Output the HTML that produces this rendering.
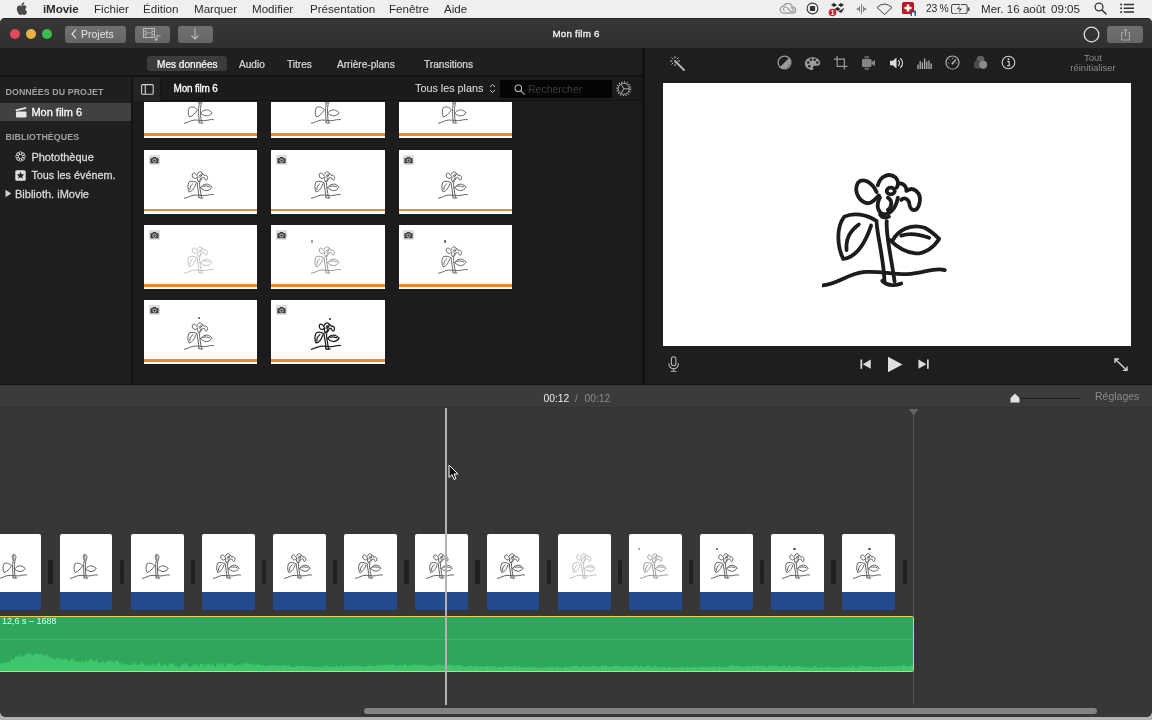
<!DOCTYPE html>
<html lang="fr">
<head>
<meta charset="utf-8">
<title>iMovie</title>
<style>
*{box-sizing:border-box;margin:0;padding:0}
html,body{width:1152px;height:720px;overflow:hidden;background:#b2b2b2;font-family:"Liberation Sans",sans-serif;}
body{position:relative}
#menubar,#win{will-change:transform}
.abs{position:absolute}
.t{position:absolute;white-space:nowrap}
#menubar{position:absolute;left:0;top:0;width:1152px;height:18px;background:#efefef;color:#2c2c2c;font-size:11.600px;line-height:18px}
#menubar .t{top:0}
#win{position:absolute;left:0;top:18px;width:1152px;height:698.500px;background:#1e1e1e;border-radius:5px 5px 6px 6px;overflow:hidden}
#titlebar{position:absolute;left:0;top:0;width:1152px;height:30px;background:linear-gradient(#373737,#303030);border-top:1px solid #262626}
.tl{position:absolute;top:9.500px;width:10.600px;height:10.600px;border-radius:50%}
.tbtn{position:absolute;top:6.600px;height:17px;background:linear-gradient(#707070,#666);border-radius:3px;color:#e4e4e4;font-size:10.500px;line-height:17px}
.sh{position:absolute;left:5.500px;font-size:8.800px;font-weight:bold;color:#a0a0a0;line-height:12px;white-space:nowrap;letter-spacing:.1px}
.si{position:absolute;left:31.400px;font-size:11px;-webkit-text-stroke:.28px;color:#dcdcdc;line-height:16px;white-space:nowrap}
.th{position:absolute;width:113.300px;height:64px;background:#fff}
.ob{position:absolute;left:0;top:59.200px;width:113.300px;height:2.600px;background:#e28a3c}
.clip{position:absolute;height:76px;background:linear-gradient(#fff 0,#fff 57.700px,#254b8f 57.700px,#254b8f 100%);border-radius:2px;overflow:hidden}
</style>
</head>
<body>
<svg width="0" height="0" style="position:absolute">
<defs>
<symbol id="fl" viewBox="100 100 560 520">
<g fill="none" stroke-linecap="round" stroke-linejoin="round">
<path d="M105,608 C180,600 220,550 300,548 C380,546 420,560 480,558 C560,555 600,525 650,540"/>
<path d="M345,330 C350,400 375,480 380,590"/>
<path d="M390,320 C385,380 410,480 425,590"/>
<path d="M370,588 C390,610 430,612 455,600"/>
<path d="M345,320 C300,290 240,280 200,300 C160,350 170,440 195,490 C260,480 300,400 320,340"/>
<path d="M265,335 C230,360 205,400 210,450"/>
<path d="M415,410 C440,360 500,330 560,350 C590,365 610,385 625,400 C600,440 560,465 520,465 C470,460 430,430 405,405"/>
<path d="M455,385 C500,370 540,380 580,395"/>
<path d="M345,190 C320,140 280,125 260,150 C240,190 270,240 310,240 C330,235 345,215 355,205"/>
<path d="M350,160 C360,120 400,100 430,125 C445,140 440,160 435,170"/>
<path d="M440,150 C470,150 480,170 478,185 C510,160 548,195 537,240 C527,282 495,282 490,235 C480,215 465,215 455,225"/>
<ellipse cx="408" cy="185" rx="18" ry="15"/>
<path d="M360,215 C340,250 350,280 375,290 C400,290 430,270 440,215"/>
<path d="M395,215 C420,230 410,260 395,270"/>
<path d="M360,290 C365,300 380,310 400,300"/>
</g>
</symbol>
<symbol id="bud" viewBox="100 100 560 520">
<g fill="none" stroke-linecap="round" stroke-linejoin="round">
<path d="M105,608 C180,600 220,550 300,548 C380,546 420,560 480,558 C560,555 600,525 650,540"/>
<path d="M385,590 C380,480 355,380 385,240"/>
<path d="M425,590 C410,480 395,380 420,240"/>
<path d="M370,588 C390,610 430,612 455,600"/>
<path d="M350,350 C300,300 240,290 200,315 C170,360 175,440 200,490 C260,480 305,420 345,365"/>
<path d="M415,420 C440,370 500,345 560,365 C590,380 610,395 625,410 C600,450 560,470 520,470 C470,465 430,440 405,415"/>
<path d="M385,240 C350,200 360,140 395,125 C440,130 455,195 420,240"/>
<path d="M395,135 C392,170 396,200 400,225"/>
</g>
</symbol>
<symbol id="cam" viewBox="0 0 10 9">
<rect width="10" height="9" rx="1" fill="#dedede"/>
<path d="M1.300 2.800h1.700l.7-1h2.600l.7 1h1.700v4.700H1.300z" fill="#3c3c3c"/>
<circle cx="5" cy="5" r="1.500" fill="none" stroke="#dedede" stroke-width=".8"/>
</symbol>
</defs></svg>
<div id="menubar">
<svg class="abs" style="left:16px;top:2px" width="12" height="14" viewBox="0 0 12 14"><path d="M8.300 0.200c.1.900-.3 1.700-.8 2.300-.5.600-1.300 1-2.100.9-.1-.8.300-1.700.8-2.200C6.700.6 7.600.2 8.300.2zM10.900 4.800c-.1.100-1.400.8-1.400 2.400 0 1.900 1.700 2.500 1.700 2.500 0 .1-.3.900-.9 1.800-.5.800-1.100 1.500-1.900 1.500s-1.100-.5-2-.5c-1 0-1.300.5-2 .5-.8 0-1.400-.8-2-1.600C1.400 10 .8 8 .8 6.700c0-2.200 1.400-3.300 2.800-3.300.8 0 1.500.5 2 .5.500 0 1.300-.6 2.200-.6.400 0 1.700 0 2.600 1.300z" fill="#4a4a4a"/></svg>
<span class="t" style="left:43px;font-weight:bold;letter-spacing:-.1px">iMovie</span>
<span class="t" style="left:94px;">Fichier</span>
<span class="t" style="left:143px;">Édition</span>
<span class="t" style="left:194px;">Marquer</span>
<span class="t" style="left:252px;">Modifier</span>
<span class="t" style="left:310px;">Présentation</span>
<span class="t" style="left:389px;">Fenêtre</span>
<span class="t" style="left:444px;">Aide</span>
<svg class="abs" style="left:779px;top:3px" width="18" height="12" viewBox="0 0 18 12"><path d="M5 10.200a3.600 3.600 0 0 1-.3-7.200 4.600 4.600 0 0 1 8.600.8 3.200 3.200 0 0 1 .2 6.400z" fill="none" stroke="#9a9a9a" stroke-width="1.300"/><path d="M5.500 8a2.200 2.200 0 1 1 3.300-2.500l2.500 2.500a1.800 1.800 0 1 0 .2-2.800" fill="none" stroke="#9a9a9a" stroke-width="1.100"/></svg>
<svg class="abs" style="left:806.200px;top:2.300px" width="13" height="13" viewBox="0 0 14 14"><circle cx="7" cy="7" r="5.800" fill="none" stroke="#333" stroke-width="1.200"/><rect x="4.200" y="4.200" width="5.600" height="5.600" rx="1" fill="#333"/></svg>
<svg class="abs" style="left:828px;top:2px" width="18" height="15" viewBox="0 0 18 15"><path d="M6 1l3 2-3 2-3-2zM13 1l3 2-3 2-3-2zM9.500 5l3 2-3 2-3-2zM13 8l3-2v1l-3 4-3-2z" fill="#2a2a2a"/><circle cx="4.500" cy="10.500" r="3.800" fill="#d0202a"/><text x="4.500" y="13" font-size="6.500" fill="#fff" text-anchor="middle" font-family="Liberation Sans" font-weight="bold">1</text></svg>
<svg class="abs" style="left:855.500px;top:3px" width="11" height="12" viewBox="0 0 14 13"><path d="M7 0v13M4.500 3v7M9.500 3v7" stroke="#666" stroke-width="1"/><path d="M0.500 6.500l3-2v4zM13.500 6.500l-3-2v4z" fill="#666"/></svg>
<svg class="abs" style="left:876px;top:3px" width="17" height="12" viewBox="0 0 17 12"><path d="M1 4.500Q8.500-2.500 16 4.500L8.500 11.500z" fill="none" stroke="#444" stroke-width="1" stroke-linejoin="round"/></svg>
<svg class="abs" style="left:901px;top:1px" width="16" height="16" viewBox="0 0 16 16"><rect x="1" y="1" width="12" height="12" rx="1.500" fill="#c4141f"/><path d="M7 3.500v7M3.500 7h7" stroke="#fff" stroke-width="2.600"/><rect x="9.500" y="9.500" width="5.500" height="5.500" rx="1" fill="#2a4f9a"/><rect x="11" y="11.500" width="2.500" height="3.500" fill="#fff"/></svg>
<span class="t" style="left:926px;font-size:10.400px;letter-spacing:-.35px">23 %</span>
<svg class="abs" style="left:951px;top:4px" width="19.500" height="10.300" viewBox="0 0 21 11"><rect x="0.600" y="0.600" width="16.800" height="9.800" rx="2" fill="none" stroke="#444" stroke-width="1.100"/><rect x="18.300" y="3.500" width="1.600" height="4" rx=".7" fill="#444"/><path d="M10.500 0l-5 6h3.500l-1.500 5 5-6.500h-3.500z" fill="#333" stroke="#efefef" stroke-width=".8"/></svg>
<span class="t" style="left:981px">Mer. 16 août</span>
<span class="t" style="left:1051px">09:05</span>
<svg class="abs" style="left:1094px;top:2.200px" width="13" height="13" viewBox="0 0 13 13"><circle cx="5" cy="5" r="3.900" fill="none" stroke="#333" stroke-width="1.300"/><path d="M8 8l4 4" stroke="#333" stroke-width="1.500" stroke-linecap="round"/></svg>
<svg class="abs" style="left:1119.500px;top:3.300px" width="14" height="10.500" viewBox="0 0 15 11"><path d="M4 1.500h11M4 5.500h11M4 9.500h11" stroke="#333" stroke-width="1.600"/><circle cx="1.200" cy="1.500" r="1.100" fill="#333"/><circle cx="1.200" cy="5.500" r="1.100" fill="#333"/><circle cx="1.200" cy="9.500" r="1.100" fill="#333"/></svg>
</div>
<div class="abs" style="left:0;top:17px;width:1152px;height:8px;background:#efefef"></div>
<div id="win">
<div id="titlebar">
<div class="tl" style="left:9.600px;background:#e2485a"></div>
<div class="tl" style="left:25.900px;background:#e9b444"></div>
<div class="tl" style="left:41.900px;background:#3bbd4c"></div>
<div class="tbtn" style="left:64.500px;width:61.500px"><svg class="abs" style="left:6px;top:3.500px" width="6" height="10" viewBox="0 0 6 10"><path d="M5 .7L1 5l4 4.300" fill="none" stroke="#e0e0e0" stroke-width="1.200"/></svg><span class="t" style="left:16.500px;top:0">Projets</span></div>
<div class="tbtn" style="left:135px;width:35px"><svg class="abs" style="left:8px;top:2.500px" width="20" height="13" viewBox="0 0 20 13"><rect x=".5" y=".5" width="11" height="9" fill="none" stroke="#b8b8b8" stroke-width="1"/><path d="M3 .5v9M9 .5v9M.5 3.500h2.500M.5 6.500h2.500M9 3.500h2.500M9 6.500h2.500M3 5h6" stroke="#b8b8b8" stroke-width=".8"/><path d="M14 11.500V7l3.500 1.500" fill="none" stroke="#b8b8b8" stroke-width="1"/><circle cx="13" cy="11.500" r="1.200" fill="#b8b8b8"/></svg></div>
<div class="tbtn" style="left:178px;width:34.500px"><svg class="abs" style="left:12px;top:2.500px" width="10" height="12" viewBox="0 0 10 12"><path d="M5 .5v10M1.500 7.500l3.500 3.500 3.500-3.500" fill="none" stroke="#bdbdbd" stroke-width="1.100"/></svg></div>
<div class="t" style="left:0;width:1152px;top:8.300px;text-align:center;color:#f2f2f2;font-size:9.800px;letter-spacing:.2px;-webkit-text-stroke:.3px;line-height:14px">Mon film 6</div>
<svg class="abs" style="left:1082.500px;top:7.100px" width="17" height="17" viewBox="0 0 17 17"><circle cx="8.500" cy="8.500" r="7.300" fill="none" stroke="#e2e2e2" stroke-width="1.300"/></svg>
<div class="tbtn" style="left:1107px;width:35.500px"><svg class="abs" style="left:12.500px;top:2.500px" width="11" height="13" viewBox="0 0 11 13"><path d="M3.500 4.500H1.500v7.500h8V4.500H7.500" fill="none" stroke="#a8a8a8" stroke-width="1"/><path d="M5.500 8V1M3.500 3l2-2 2 2" fill="none" stroke="#a8a8a8" stroke-width="1"/></svg></div>
</div>
<div class="abs" style="left:0;top:30px;width:642px;height:26.500px;background:#1f1f1f"></div>
<div class="abs" style="left:146.700px;top:38px;width:80px;height:15.300px;background:#3c3c3c;border-radius:3px"></div>
<span class="t" style="left:157px;top:40px;font-size:10.100px;-webkit-text-stroke:.22px;line-height:14px;color:#fff">Mes données</span>
<span class="t" style="left:239px;top:40px;font-size:10.100px;-webkit-text-stroke:.22px;line-height:14px;color:#dadada">Audio</span>
<span class="t" style="left:287px;top:40px;font-size:10.100px;-webkit-text-stroke:.22px;line-height:14px;color:#dadada">Titres</span>
<span class="t" style="left:337px;top:40px;font-size:10.100px;-webkit-text-stroke:.22px;line-height:14px;color:#dadada">Arrière-plans</span>
<span class="t" style="left:424px;top:40px;font-size:10.100px;-webkit-text-stroke:.22px;line-height:14px;color:#dadada">Transitions</span>
<div class="abs" style="left:0;top:56.5px;width:642px;height:2.200px;background:#121212"></div>
<div class="abs" style="left:0;top:58.7px;width:131px;height:308px;background:#1f1f1f"></div>
<div class="abs" style="left:131px;top:58.7px;width:2.200px;height:308px;background:#131313"></div>
<div class="sh" style="top:68px">DONNÉES DU PROJET</div>
<div class="abs" style="left:0;top:85px;width:131px;height:18px;background:#414141"></div>
<svg class="abs" style="left:14.500px;top:88px" width="12" height="12" viewBox="0 0 12 12"><path d="M.5 3.500L11 1l.4 1.800L1 5.300z" fill="#e6e6e6"/><rect x="1" y="5.500" width="10.500" height="6" rx="1" fill="#e6e6e6"/></svg>
<div class="si" style="top:86px;color:#fff">Mon film 6</div>
<div class="sh" style="top:113px">BIBLIOTHÈQUES</div>
<svg class="abs" style="left:14.500px;top:133.2px" width="11" height="11" viewBox="0 0 11 11"><g fill="none" stroke="#d8d8d8" stroke-width=".85"><circle cx="8.90" cy="5.50" r="1.450"/><circle cx="7.90" cy="7.90" r="1.450"/><circle cx="5.50" cy="8.90" r="1.450"/><circle cx="3.10" cy="7.90" r="1.450"/><circle cx="2.10" cy="5.50" r="1.450"/><circle cx="3.10" cy="3.10" r="1.450"/><circle cx="5.50" cy="2.10" r="1.450"/><circle cx="7.90" cy="3.10" r="1.450"/></g></svg>
<div class="si" style="top:131px">Photothèque</div>
<svg class="abs" style="left:14.700px;top:152px" width="11" height="11" viewBox="0 0 11 11"><rect x=".3" y=".3" width="10.400" height="10.400" rx="1.500" fill="#e0e0e0"/><path d="M5.500 1.800l1.100 2.500 2.700.2-2.100 1.700.7 2.600-2.400-1.500-2.400 1.500.7-2.600-2.100-1.700 2.700-.2z" fill="#222"/></svg>
<div class="si" style="top:149px;font-size:10.800px">Tous les événem.</div>
<svg class="abs" style="left:5px;top:171px" width="7" height="9" viewBox="0 0 7 9"><path d="M.5 .8L6.300 4.500.5 8.200z" fill="#cfcfcf"/></svg>
<div class="si" style="top:168px;left:15px">Biblioth. iMovie</div>
<div class="abs" style="left:133.200px;top:58.7px;width:508.500px;height:308px;background:#1c1c1c"></div>
<div class="abs" style="left:133px;top:83.5px;width:508px;height:283px;overflow:hidden">
<div class="th" style="left:11.1px;top:-27.3px">
<svg class="abs" style="left:39.500px;top:21.500px" width="30" height="28" stroke="#5a5a5a" stroke-width="17"><use href="#bud"/></svg>
<div class="ob"></div></div>
<div class="th" style="left:138.4px;top:-27.3px">
<svg class="abs" style="left:39.500px;top:21.500px" width="30" height="28" stroke="#5a5a5a" stroke-width="17"><use href="#bud"/></svg>
<div class="ob"></div></div>
<div class="th" style="left:265.7px;top:-27.3px">
<svg class="abs" style="left:39.500px;top:21.500px" width="30" height="28" stroke="#5a5a5a" stroke-width="17"><use href="#bud"/></svg>
<div class="ob"></div></div>
<div class="th" style="left:11.1px;top:48.1px">
<svg class="abs" style="left:4.500px;top:5.200px" width="11" height="10"><use href="#cam"/></svg>
<svg class="abs" style="left:39.500px;top:21.500px" width="30" height="28" stroke="#505050" stroke-width="17"><use href="#fl"/></svg>
<div class="ob"></div></div>
<div class="th" style="left:138.4px;top:48.1px">
<svg class="abs" style="left:4.500px;top:5.200px" width="11" height="10"><use href="#cam"/></svg>
<svg class="abs" style="left:39.500px;top:21.500px" width="30" height="28" stroke="#505050" stroke-width="17"><use href="#fl"/></svg>
<div class="ob"></div></div>
<div class="th" style="left:265.7px;top:48.1px">
<svg class="abs" style="left:4.500px;top:5.200px" width="11" height="10"><use href="#cam"/></svg>
<svg class="abs" style="left:39.500px;top:21.500px" width="30" height="28" stroke="#505050" stroke-width="17"><use href="#fl"/></svg>
<div class="ob"></div></div>
<div class="th" style="left:11.1px;top:123.3px">
<svg class="abs" style="left:4.500px;top:5.200px" width="11" height="10"><use href="#cam"/></svg>
<svg class="abs" style="left:39.500px;top:21.500px" width="30" height="28" stroke="#bdbdbd" stroke-width="17"><use href="#fl"/></svg>
<div class="ob"></div></div>
<div class="th" style="left:138.4px;top:123.3px">
<svg class="abs" style="left:4.500px;top:5.200px" width="11" height="10"><use href="#cam"/></svg>
<svg class="abs" style="left:39.500px;top:21.500px" width="30" height="28" stroke="#909090" stroke-width="17"><use href="#fl"/></svg>
<div class="abs" style="left:39.2px;top:15.7px;width:2.400px;height:2.800px;background:#909090;border-radius:1px"></div>
<div class="ob"></div></div>
<div class="th" style="left:265.7px;top:123.3px">
<svg class="abs" style="left:4.500px;top:5.200px" width="11" height="10"><use href="#cam"/></svg>
<svg class="abs" style="left:39.500px;top:21.500px" width="30" height="28" stroke="#5a5a5a" stroke-width="17"><use href="#fl"/></svg>
<div class="abs" style="left:44.9px;top:15.7px;width:2.400px;height:2.800px;background:#5a5a5a;border-radius:1px"></div>
<div class="ob"></div></div>
<div class="th" style="left:11.1px;top:198.5px">
<svg class="abs" style="left:4.500px;top:5.200px" width="11" height="10"><use href="#cam"/></svg>
<svg class="abs" style="left:39.500px;top:21.500px" width="30" height="28" stroke="#505050" stroke-width="17"><use href="#fl"/></svg>
<div class="abs" style="left:53.5px;top:16.5px;width:2.400px;height:2.800px;background:#505050;border-radius:1px"></div>
<div class="ob"></div></div>
<div class="th" style="left:138.4px;top:198.5px">
<svg class="abs" style="left:4.500px;top:5.200px" width="11" height="10"><use href="#cam"/></svg>
<svg class="abs" style="left:39.500px;top:21.500px" width="30" height="28" stroke="#222" stroke-width="24"><use href="#fl"/></svg>
<div class="abs" style="left:57.2px;top:17.5px;width:2.400px;height:2.800px;background:#222;border-radius:1px"></div>
<div class="ob"></div></div>
</div>
<div class="abs" style="left:133.200px;top:58.7px;width:508.500px;height:24px;background:#1b1b1b;border-bottom:1px solid #131313"></div>
<div class="abs" style="left:133.200px;top:58.7px;width:27.800px;height:24px;background:#232323;border-right:1px solid #151515"></div>
<svg class="abs" style="left:140.500px;top:65.5px" width="13" height="11" viewBox="0 0 13 11"><rect x=".6" y=".6" width="11.600" height="9.600" rx="1" fill="none" stroke="#d2d2d2" stroke-width="1.100"/><path d="M4.300 .6v9.600" stroke="#d2d2d2" stroke-width="1.100"/></svg>
<div class="t" style="left:173.500px;top:64.3px;font-size:10px;letter-spacing:-.2px;-webkit-text-stroke:.3px;line-height:14px;color:#fff">Mon film 6</div>
<div class="t" style="left:415px;top:63px;font-size:10.800px;line-height:14px;color:#e4e4e4">Tous les plans</div>
<svg class="abs" style="left:489px;top:65px" width="7" height="11" viewBox="0 0 7 11"><path d="M1 4l2.500-2.500L6 4M1 7l2.500 2.500L6 7" fill="none" stroke="#c0c0c0" stroke-width="1"/></svg>
<div class="abs" style="left:500px;top:62px;width:112px;height:18px;background:#050505;border-radius:2px"></div>
<svg class="abs" style="left:514px;top:66px" width="11" height="11" viewBox="0 0 11 11"><circle cx="4.300" cy="4.300" r="3.300" fill="none" stroke="#b8b8b8" stroke-width="1.100"/><path d="M6.800 6.800l3.400 3.400" stroke="#b8b8b8" stroke-width="1.200" stroke-linecap="round"/></svg>
<div class="t" style="left:528px;top:64px;font-size:10.500px;line-height:14px;color:#3c3c3c">Rechercher</div>
<svg class="abs" style="left:616.300px;top:62.8px" width="15.600" height="15.600" viewBox="0 0 16 16"><circle cx="8" cy="8" r="5.700" fill="none" stroke="#bcbcbc" stroke-width=".9"/><circle cx="8" cy="8" r="7" fill="none" stroke="#bcbcbc" stroke-width="1.500" stroke-dasharray="1 1.749"/><path d="M8 8h5.500M8 8L5.300 3.200M8 8l-2.700 4.800" stroke="#bcbcbc" stroke-width=".9"/></svg>
<div class="abs" style="left:641.700px;top:30px;width:3px;height:336.500px;background:#121212"></div>
<div class="abs" style="left:663px;top:64.8px;width:467.500px;height:263px;background:#fff"></div>
<svg class="abs" style="left:822px;top:154px" width="125" height="116" stroke="#1c1c1c" stroke-width="17"><use href="#fl"/></svg>
<svg class="abs" style="left:669px;top:37px" width="17" height="16" viewBox="0 0 17 16"><path d="M6 6l9 9" stroke="#b6b6b6" stroke-width="1.800" stroke-linecap="round"/><path d="M6 1v2.500M6 8.500V11M1 6h2.500M8.500 6H11M2.500 2.500l1.700 1.700M9.500 2.500L7.800 4.200M2.500 9.500l1.700-1.700" stroke="#b6b6b6" stroke-width="1"/></svg>
<svg class="abs" style="left:777px;top:37.2px" width="15" height="15" viewBox="0 0 14 14"><circle cx="7" cy="7" r="6" fill="none" stroke="#9c9c9c" stroke-width="1.200"/><path d="M11.200 2.800A6 6 0 0 1 2.800 11.200z" fill="#9c9c9c"/></svg>
<svg class="abs" style="left:804px;top:37.5px" width="17" height="15" viewBox="0 0 16 14"><path d="M8 1C4 1 .8 3.700.8 7s3 6 6.700 6c1.300 0 1.500-1 1-1.800-.6-1 .2-2.200 1.500-2.200h2.500c1.700 0 2.700-1 2.700-2.500C15.200 3.500 12 1 8 1z" fill="#9c9c9c"/><circle cx="4" cy="6" r="1.200" fill="#1e1e1e"/><circle cx="6.500" cy="3.500" r="1.200" fill="#1e1e1e"/><circle cx="10" cy="3.500" r="1.200" fill="#1e1e1e"/><circle cx="12.500" cy="6" r="1.200" fill="#1e1e1e"/><circle cx="5" cy="9.500" r="1.200" fill="#1e1e1e"/></svg>
<svg class="abs" style="left:834.3px;top:38.2px" width="13.5" height="13.5" viewBox="0 0 15 15"><path d="M3.500 0v11.500H15M0 3.500h11.500V15" fill="none" stroke="#9c9c9c" stroke-width="1.300"/></svg>
<svg class="abs" style="left:861px;top:37px" width="15" height="16" viewBox="0 0 15 16"><rect x="1" y="4" width="9.500" height="8" rx="1.200" fill="#858585"/><path d="M10.500 7l3.500-2v6l-3.500-2z" fill="#858585"/><rect x="3.500" y="1" width="4.500" height="2.500" fill="#5c5c5c"/><rect x="3.500" y="12.500" width="4.500" height="2.500" fill="#5c5c5c"/></svg>
<svg class="abs" style="left:889px;top:38px" width="16" height="14" viewBox="0 0 16 14"><path d="M1 4.800h2.800L7.500 1.500v11L3.800 9.200H1z" fill="#dadada"/><path d="M9.500 4.500a3.500 3.500 0 0 1 0 5M11.500 2.500a6 6 0 0 1 0 9" fill="none" stroke="#dadada" stroke-width="1.100" stroke-linecap="round"/></svg>
<svg class="abs" style="left:917px;top:38px" width="15" height="14" viewBox="0 0 15 14"><path d="M1 13V8.500M3.200 13V5M5.400 13V6.500M7.600 13V2.500M9.800 13V5.500M12 13V4.500M14.200 13V7.500" stroke="#b0b0b0" stroke-width="1.300"/></svg>
<svg class="abs" style="left:945px;top:37px" width="15" height="15" viewBox="0 0 15 15"><circle cx="7.500" cy="7.500" r="6.500" fill="none" stroke="#b4b4b4" stroke-width="1.200"/><path d="M7.500 8.500L10.500 5" stroke="#b4b4b4" stroke-width="1.400" stroke-linecap="round"/><circle cx="7.500" cy="8.500" r="1" fill="#b4b4b4"/><path d="M3.200 8h1M4.500 4.500l.7.700M7.500 3v1M11.800 8h-1" stroke="#b4b4b4" stroke-width=".9"/><path d="M4.500 12.500h6" stroke="#1e1e1e" stroke-width="1.800"/></svg>
<svg class="abs" style="left:973px;top:37px" width="15" height="15" viewBox="0 0 15 15"><circle cx="7.500" cy="4.800" r="4" fill="#5e5e5e"/><circle cx="4.800" cy="9.700" r="4" fill="#4c4c4c"/><circle cx="10.200" cy="9.700" r="4" fill="#8c8c8c"/></svg>
<svg class="abs" style="left:1001px;top:37px" width="15" height="15" viewBox="0 0 15 15"><circle cx="7.500" cy="7.500" r="6.300" fill="none" stroke="#d4d4d4" stroke-width="1.100"/><circle cx="7.500" cy="4.300" r=".95" fill="#dadada"/><path d="M6.300 6.500h1.800v4.300M6 10.800h3.200" fill="none" stroke="#dadada" stroke-width="1.100"/></svg>
<div class="abs" style="left:1053px;top:34.5px;width:80px;text-align:center;font-size:9.500px;line-height:10.800px;color:#8a8a8a">Tout<br>réinitialiser</div>
<svg class="abs" style="left:668px;top:338px" width="11.3" height="16.3" viewBox="0 0 12 17"><rect x="3.600" y=".6" width="4.800" height="9.500" rx="2.400" fill="none" stroke="#bdbdbd" stroke-width="1.100"/><path d="M1 7.500v1a5 5 0 0 0 10 0v-1M6 13.500V16M3 16h6" fill="none" stroke="#bdbdbd" stroke-width="1.100"/></svg>
<svg class="abs" style="left:859.5px;top:341.3px" width="11.2" height="10.3" viewBox="0 0 12 11"><rect x=".5" y=".5" width="1.800" height="10" fill="#dcdcdc"/><path d="M11.500 .5v10L3 5.500z" fill="#dcdcdc"/></svg>
<svg class="abs" style="left:887px;top:338px" width="16" height="17" viewBox="0 0 16 17"><path d="M1 .8v15.400L15.500 8.500z" fill="#e0e0e0"/></svg>
<svg class="abs" style="left:918px;top:341.3px" width="11.2" height="10.3" viewBox="0 0 12 11"><rect x="9.700" y=".5" width="1.800" height="10" fill="#dcdcdc"/><path d="M.5 .5v10L9 5.500z" fill="#dcdcdc"/></svg>
<svg class="abs" style="left:1113.5px;top:339.5px" width="14" height="13.5" viewBox="0 0 14 13.5"><path d="M1 5V1h4M1 1l12 11.500M13 8.500v4H9" fill="none" stroke="#d2d2d2" stroke-width="1.400"/></svg>
<div class="abs" style="left:0;top:366px;width:1152px;height:1px;background:#141414"></div>
<div class="abs" style="left:0;top:366.8px;width:1152px;height:334px;background:#373737"></div>
<div class="abs" style="left:0;top:367px;width:1152px;height:23px;background:#3b3b3b;border-bottom:1px solid #333"></div>
<div class="t" style="left:543.500px;top:373.5px;font-size:10.300px;line-height:13px;color:#ededed">00:12</div>
<div class="t" style="left:575px;top:373.5px;font-size:10.300px;line-height:13px;color:#8a8a8a">/</div>
<div class="t" style="left:584.500px;top:373.5px;font-size:10.300px;line-height:13px;color:#8a8a8a">00:12</div>
<div class="abs" style="left:1020px;top:379.5px;width:60px;height:1.600px;background:#1c1c1c"></div>
<svg class="abs" style="left:1009.700px;top:375.3px" width="10" height="10" viewBox="0 0 10 10"><path d="M5 .5L9.500 5v4.500H.5V5z" fill="#e2e2e2"/></svg>
<div class="t" style="left:1095px;top:372px;font-size:10.500px;line-height:13px;color:#8a8a8a">Réglages</div>
<div class="clip" style="left:-12.0px;top:516px;width:53.2px"><svg class="abs" style="left:11.2px;top:18.500px" width="28" height="26" stroke="#505050" stroke-width="18"><use href="#bud"/></svg></div>
<div class="abs" style="left:48.4px;top:541.5px;width:4.400px;height:24.500px;background:#202020;border-radius:1px"></div>
<div class="clip" style="left:59.5px;top:516px;width:52.9px"><svg class="abs" style="left:10.9px;top:18.500px" width="28" height="26" stroke="#505050" stroke-width="18"><use href="#bud"/></svg></div>
<div class="abs" style="left:119.6px;top:541.5px;width:4.400px;height:24.500px;background:#202020;border-radius:1px"></div>
<div class="clip" style="left:130.7px;top:516px;width:52.9px"><svg class="abs" style="left:10.9px;top:18.500px" width="28" height="26" stroke="#505050" stroke-width="18"><use href="#bud"/></svg></div>
<div class="abs" style="left:190.8px;top:541.5px;width:4.400px;height:24.500px;background:#202020;border-radius:1px"></div>
<div class="clip" style="left:201.8px;top:516px;width:52.9px"><svg class="abs" style="left:10.9px;top:18.500px" width="28" height="26" stroke="#505050" stroke-width="18"><use href="#fl"/></svg></div>
<div class="abs" style="left:261.9px;top:541.5px;width:4.400px;height:24.500px;background:#202020;border-radius:1px"></div>
<div class="clip" style="left:273.0px;top:516px;width:52.9px"><svg class="abs" style="left:10.9px;top:18.500px" width="28" height="26" stroke="#505050" stroke-width="18"><use href="#fl"/></svg></div>
<div class="abs" style="left:333.1px;top:541.5px;width:4.400px;height:24.500px;background:#202020;border-radius:1px"></div>
<div class="clip" style="left:344.2px;top:516px;width:52.9px"><svg class="abs" style="left:10.9px;top:18.500px" width="28" height="26" stroke="#505050" stroke-width="18"><use href="#fl"/></svg></div>
<div class="abs" style="left:404.3px;top:541.5px;width:4.400px;height:24.500px;background:#202020;border-radius:1px"></div>
<div class="clip" style="left:415.4px;top:516px;width:52.9px"><svg class="abs" style="left:10.9px;top:18.500px" width="28" height="26" stroke="#505050" stroke-width="18"><use href="#fl"/></svg></div>
<div class="abs" style="left:475.4px;top:541.5px;width:4.400px;height:24.500px;background:#202020;border-radius:1px"></div>
<div class="clip" style="left:486.5px;top:516px;width:52.9px"><svg class="abs" style="left:10.9px;top:18.500px" width="28" height="26" stroke="#484848" stroke-width="18"><use href="#fl"/></svg></div>
<div class="abs" style="left:546.6px;top:541.5px;width:4.400px;height:24.500px;background:#202020;border-radius:1px"></div>
<div class="clip" style="left:557.7px;top:516px;width:52.9px"><svg class="abs" style="left:10.9px;top:18.500px" width="28" height="26" stroke="#b8b8b8" stroke-width="18"><use href="#fl"/></svg></div>
<div class="abs" style="left:617.8px;top:541.5px;width:4.400px;height:24.500px;background:#202020;border-radius:1px"></div>
<div class="clip" style="left:628.9px;top:516px;width:52.9px"><svg class="abs" style="left:10.9px;top:18.500px" width="28" height="26" stroke="#909090" stroke-width="18"><use href="#fl"/></svg><div class="abs" style="left:8.8px;top:13.700px;width:2.400px;height:2.600px;background:#909090;border-radius:1px"></div></div>
<div class="abs" style="left:689.0px;top:541.5px;width:4.400px;height:24.500px;background:#202020;border-radius:1px"></div>
<div class="clip" style="left:700.0px;top:516px;width:52.9px"><svg class="abs" style="left:10.9px;top:18.500px" width="28" height="26" stroke="#505050" stroke-width="18"><use href="#fl"/></svg><div class="abs" style="left:15.5px;top:13.700px;width:2.400px;height:2.600px;background:#505050;border-radius:1px"></div></div>
<div class="abs" style="left:760.1px;top:541.5px;width:4.400px;height:24.500px;background:#202020;border-radius:1px"></div>
<div class="clip" style="left:771.2px;top:516px;width:52.9px"><svg class="abs" style="left:10.9px;top:18.500px" width="28" height="26" stroke="#505050" stroke-width="18"><use href="#fl"/></svg><div class="abs" style="left:22.3px;top:13.700px;width:2.400px;height:2.600px;background:#505050;border-radius:1px"></div></div>
<div class="abs" style="left:831.3px;top:541.5px;width:4.400px;height:24.500px;background:#202020;border-radius:1px"></div>
<div class="clip" style="left:842.4px;top:516px;width:52.9px"><svg class="abs" style="left:10.9px;top:18.500px" width="28" height="26" stroke="#505050" stroke-width="18"><use href="#fl"/></svg><div class="abs" style="left:25.8px;top:13.700px;width:2.400px;height:2.600px;background:#505050;border-radius:1px"></div></div>
<div class="abs" style="left:902.5px;top:541.5px;width:4.400px;height:24.500px;background:#202020;border-radius:1px"></div>
<div class="abs" style="left:912.700px;top:396px;width:1.700px;height:291px;background:#4f4f4f"></div>
<div class="abs" style="left:916.500px;top:394px;width:1.500px;height:293px;background:#323232"></div>
<svg class="abs" style="left:909px;top:391.3px" width="9.400" height="6.400" viewBox="0 0 9 6"><path d="M0 0h9L4.500 6z" fill="#636363"/></svg>
<div class="abs" style="left:-2px;top:598px;width:916.300px;height:56px;background:#2fa65b;border:1.700px solid #dcd843;border-radius:2px;overflow:hidden"><svg class="abs" style="left:0;top:0" width="914" height="54" viewBox="0 0 914 54"><path d="M0,54 L0,46.9 L1,47.5 L2,45.0 L3,47.5 L4,45.0 L5,45.6 L6,46.7 L7,44.3 L8,46.2 L9,44.0 L10,45.4 L11,44.9 L12,43.0 L13,40.7 L14,43.6 L15,42.7 L16,40.4 L17,38.5 L18,39.9 L19,40.3 L20,37.2 L21,41.2 L22,37.0 L23,39.3 L24,39.7 L25,39.5 L26,38.3 L27,35.7 L28,38.4 L29,36.4 L30,36.0 L31,37.1 L32,36.2 L33,38.4 L34,38.4 L35,37.8 L36,35.6 L37,36.9 L38,37.6 L39,36.5 L40,37.3 L41,38.2 L42,36.1 L43,36.8 L44,39.2 L45,38.0 L46,38.5 L47,37.1 L48,38.1 L49,40.5 L50,37.5 L51,41.9 L52,40.8 L53,39.4 L54,42.5 L55,41.2 L56,43.5 L57,40.8 L58,40.6 L59,41.7 L60,40.4 L61,43.2 L62,41.6 L63,42.2 L64,42.4 L65,43.1 L66,41.4 L67,40.9 L68,43.2 L69,42.4 L70,45.3 L71,42.3 L72,42.6 L73,41.0 L74,41.9 L75,44.4 L76,44.0 L77,42.7 L78,45.7 L79,43.7 L80,45.1 L81,45.3 L82,45.6 L83,42.3 L84,45.3 L85,44.8 L86,44.1 L87,41.9 L88,45.6 L89,43.9 L90,43.5 L91,41.9 L92,42.3 L93,42.1 L94,44.9 L95,44.3 L96,44.6 L97,42.1 L98,41.8 L99,45.7 L100,45.6 L101,45.4 L102,45.4 L103,44.3 L104,43.9 L105,45.4 L106,46.7 L107,44.8 L108,45.1 L109,44.2 L110,42.5 L111,43.8 L112,44.7 L113,44.3 L114,44.0 L115,47.0 L116,43.1 L117,43.8 L118,43.4 L119,43.8 L120,45.8 L121,45.8 L122,47.3 L123,44.9 L124,47.6 L125,47.7 L126,47.1 L127,47.4 L128,46.6 L129,48.0 L130,48.4 L131,47.7 L132,48.0 L133,46.9 L134,48.5 L135,44.6 L136,45.9 L137,48.2 L138,47.7 L139,47.4 L140,47.4 L141,48.6 L142,45.2 L143,44.6 L144,47.1 L145,47.1 L146,49.0 L147,49.0 L148,48.0 L149,48.4 L150,45.8 L151,49.0 L152,49.7 L153,45.4 L154,47.4 L155,49.3 L156,47.5 L157,49.9 L158,47.6 L159,45.6 L160,46.1 L161,47.0 L162,49.0 L163,48.6 L164,49.6 L165,46.8 L166,47.9 L167,46.8 L168,48.9 L169,49.5 L170,46.7 L171,45.9 L172,46.6 L173,46.8 L174,46.8 L175,47.2 L176,49.6 L177,48.2 L178,49.0 L179,50.6 L180,50.6 L181,49.4 L182,49.5 L183,47.5 L184,46.3 L185,48.7 L186,46.4 L187,46.1 L188,46.3 L189,49.0 L190,49.7 L191,49.7 L192,49.8 L193,49.8 L194,47.8 L195,46.5 L196,46.8 L197,48.5 L198,47.6 L199,46.9 L200,50.3 L201,47.6 L202,46.4 L203,47.0 L204,47.1 L205,48.3 L206,49.7 L207,46.8 L208,49.0 L209,46.7 L210,45.9 L211,48.6 L212,48.5 L213,46.0 L214,47.0 L215,49.6 L216,49.7 L217,49.6 L218,46.0 L219,46.5 L220,49.5 L221,46.3 L222,45.6 L223,47.0 L224,48.5 L225,47.5 L226,49.4 L227,49.9 L228,45.4 L229,46.9 L230,47.4 L231,45.5 L232,47.8 L233,45.7 L234,45.9 L235,48.8 L236,48.5 L237,48.3 L238,48.5 L239,46.9 L240,48.4 L241,47.6 L242,48.9 L243,45.2 L244,47.8 L245,47.3 L246,46.7 L247,45.1 L248,47.4 L249,45.0 L250,46.9 L251,46.8 L252,46.8 L253,49.1 L254,47.1 L255,48.3 L256,49.1 L257,45.4 L258,48.3 L259,46.8 L260,46.1 L261,48.2 L262,48.8 L263,48.4 L264,48.3 L265,47.8 L266,49.5 L267,48.4 L268,49.2 L269,49.1 L270,47.9 L271,48.6 L272,48.5 L273,48.0 L274,47.7 L275,48.9 L276,48.5 L277,48.8 L278,48.8 L279,48.4 L280,49.0 L281,48.8 L282,49.0 L283,47.8 L284,48.5 L285,48.1 L286,47.9 L287,49.7 L288,48.9 L289,48.0 L290,48.3 L291,50.1 L292,50.1 L293,49.3 L294,50.3 L295,49.9 L296,50.3 L297,48.9 L298,48.6 L299,48.3 L300,50.2 L301,48.8 L302,49.0 L303,50.3 L304,48.4 L305,48.2 L306,50.1 L307,48.3 L308,49.7 L309,49.5 L310,48.2 L311,48.6 L312,50.3 L313,49.7 L314,49.4 L315,49.9 L316,50.3 L317,50.0 L318,48.9 L319,50.7 L320,49.4 L321,49.6 L322,50.7 L323,49.9 L324,49.2 L325,49.5 L326,50.6 L327,48.2 L328,48.7 L329,48.3 L330,50.4 L331,50.0 L332,50.6 L333,48.7 L334,50.0 L335,50.3 L336,49.6 L337,48.3 L338,48.5 L339,49.9 L340,50.2 L341,48.2 L342,49.1 L343,48.7 L344,50.3 L345,50.3 L346,48.7 L347,49.3 L348,50.2 L349,48.0 L350,48.7 L351,48.3 L352,50.1 L353,48.1 L354,50.1 L355,48.0 L356,49.0 L357,49.3 L358,48.7 L359,47.8 L360,49.4 L361,49.7 L362,48.7 L363,49.4 L364,49.7 L365,49.5 L366,49.8 L367,49.4 L368,49.1 L369,49.1 L370,47.9 L371,49.0 L372,48.5 L373,49.3 L374,48.8 L375,49.6 L376,49.0 L377,49.6 L378,47.8 L379,48.2 L380,49.1 L381,48.3 L382,47.1 L383,49.2 L384,47.4 L385,48.3 L386,48.2 L387,47.3 L388,48.4 L389,48.1 L390,47.6 L391,46.8 L392,48.4 L393,47.2 L394,47.5 L395,47.7 L396,48.2 L397,48.4 L398,49.1 L399,48.9 L400,49.0 L401,47.3 L402,48.5 L403,48.8 L404,49.0 L405,47.1 L406,47.0 L407,47.5 L408,48.5 L409,48.6 L410,48.4 L411,48.0 L412,48.8 L413,48.0 L414,48.5 L415,46.7 L416,46.7 L417,47.8 L418,48.6 L419,46.8 L420,48.4 L421,48.3 L422,49.2 L423,48.3 L424,48.1 L425,48.0 L426,48.8 L427,48.0 L428,49.3 L429,48.7 L430,49.1 L431,48.4 L432,49.3 L433,49.3 L434,48.7 L435,48.9 L436,48.0 L437,48.1 L438,47.6 L439,47.9 L440,47.7 L441,47.4 L442,48.6 L443,48.8 L444,47.2 L445,49.3 L446,47.9 L447,48.1 L448,49.6 L449,47.7 L450,47.6 L451,48.3 L452,48.0 L453,47.8 L454,49.6 L455,48.6 L456,48.7 L457,47.9 L458,48.0 L459,48.0 L460,48.6 L461,47.9 L462,48.4 L463,48.4 L464,49.6 L465,50.1 L466,49.9 L467,49.4 L468,50.0 L469,48.2 L470,48.9 L471,48.8 L472,48.8 L473,48.7 L474,49.2 L475,50.4 L476,48.5 L477,48.6 L478,49.3 L479,49.2 L480,48.9 L481,50.4 L482,48.7 L483,50.0 L484,50.4 L485,50.0 L486,48.8 L487,50.2 L488,48.8 L489,48.2 L490,49.5 L491,49.7 L492,49.5 L493,49.0 L494,48.8 L495,49.2 L496,49.1 L497,50.6 L498,50.4 L499,50.1 L500,48.9 L501,50.0 L502,49.3 L503,50.7 L504,50.6 L505,50.1 L506,49.1 L507,49.0 L508,49.0 L509,50.0 L510,49.4 L511,49.5 L512,49.5 L513,50.4 L514,48.4 L515,50.2 L516,48.2 L517,48.3 L518,50.6 L519,49.5 L520,48.5 L521,48.8 L522,50.1 L523,50.6 L524,50.8 L525,48.9 L526,50.8 L527,49.9 L528,51.0 L529,50.0 L530,49.0 L531,51.0 L532,49.3 L533,50.1 L534,49.2 L535,49.7 L536,50.9 L537,49.2 L538,50.2 L539,51.0 L540,51.0 L541,50.2 L542,50.3 L543,50.7 L544,51.0 L545,50.6 L546,50.7 L547,49.3 L548,51.0 L549,49.5 L550,49.3 L551,51.0 L552,49.1 L553,49.6 L554,49.1 L555,50.6 L556,50.4 L557,50.3 L558,48.8 L559,49.8 L560,50.4 L561,50.2 L562,50.6 L563,51.0 L564,50.9 L565,49.1 L566,50.4 L567,48.8 L568,50.5 L569,50.4 L570,49.8 L571,50.6 L572,50.1 L573,48.6 L574,48.7 L575,48.9 L576,49.3 L577,48.6 L578,48.5 L579,49.5 L580,49.0 L581,50.7 L582,48.9 L583,49.6 L584,48.8 L585,49.1 L586,49.9 L587,50.5 L588,48.3 L589,50.3 L590,49.4 L591,49.7 L592,49.8 L593,48.6 L594,48.0 L595,49.8 L596,48.8 L597,49.7 L598,49.0 L599,49.4 L600,49.9 L601,49.9 L602,49.8 L603,48.0 L604,49.1 L605,49.8 L606,48.0 L607,47.8 L608,49.1 L609,49.9 L610,49.8 L611,50.0 L612,49.4 L613,50.0 L614,49.7 L615,49.6 L616,48.8 L617,48.0 L618,48.4 L619,49.2 L620,49.2 L621,49.0 L622,49.3 L623,49.5 L624,50.2 L625,49.6 L626,47.9 L627,50.0 L628,49.1 L629,48.8 L630,48.2 L631,49.9 L632,49.7 L633,49.8 L634,49.5 L635,49.4 L636,48.1 L637,48.4 L638,48.4 L639,50.5 L640,50.5 L641,48.8 L642,48.4 L643,49.5 L644,49.2 L645,50.7 L646,49.8 L647,48.4 L648,48.7 L649,48.7 L650,48.4 L651,50.3 L652,50.6 L653,50.5 L654,49.6 L655,49.3 L656,48.6 L657,49.2 L658,49.4 L659,49.2 L660,50.0 L661,49.7 L662,51.0 L663,49.2 L664,50.6 L665,48.9 L666,49.6 L667,50.5 L668,51.0 L669,50.7 L670,49.7 L671,49.6 L672,51.0 L673,51.0 L674,50.1 L675,49.9 L676,50.4 L677,50.8 L678,49.9 L679,51.0 L680,50.7 L681,50.3 L682,49.0 L683,49.8 L684,49.2 L685,50.3 L686,50.9 L687,50.8 L688,49.0 L689,49.7 L690,50.7 L691,51.0 L692,50.2 L693,49.7 L694,50.4 L695,50.8 L696,49.7 L697,49.1 L698,50.8 L699,51.0 L700,50.5 L701,50.3 L702,49.6 L703,50.8 L704,49.3 L705,49.4 L706,50.0 L707,50.7 L708,48.8 L709,50.4 L710,49.1 L711,50.6 L712,50.6 L713,49.2 L714,50.3 L715,48.7 L716,49.8 L717,50.5 L718,50.4 L719,49.9 L720,49.3 L721,48.5 L722,50.5 L723,49.9 L724,50.3 L725,48.3 L726,50.4 L727,50.6 L728,50.6 L729,49.7 L730,48.4 L731,48.4 L732,48.8 L733,48.1 L734,48.2 L735,49.7 L736,50.1 L737,48.1 L738,48.6 L739,50.4 L740,48.8 L741,49.5 L742,49.5 L743,49.6 L744,50.0 L745,50.4 L746,49.6 L747,49.5 L748,47.9 L749,50.0 L750,47.9 L751,49.8 L752,49.4 L753,48.2 L754,48.2 L755,49.2 L756,50.1 L757,49.1 L758,49.3 L759,47.9 L760,49.8 L761,49.3 L762,48.0 L763,50.2 L764,49.2 L765,48.2 L766,48.4 L767,50.2 L768,50.2 L769,50.2 L770,48.0 L771,49.7 L772,48.5 L773,48.1 L774,49.5 L775,49.7 L776,48.0 L777,48.9 L778,49.8 L779,48.7 L780,49.7 L781,49.8 L782,50.5 L783,48.7 L784,48.3 L785,49.0 L786,48.3 L787,50.6 L788,50.1 L789,49.5 L790,48.3 L791,48.4 L792,49.8 L793,50.2 L794,49.8 L795,49.6 L796,48.6 L797,50.5 L798,48.9 L799,49.1 L800,48.9 L801,49.1 L802,49.5 L803,50.2 L804,50.3 L805,50.2 L806,49.2 L807,51.0 L808,50.7 L809,49.3 L810,50.6 L811,51.0 L812,51.0 L813,49.9 L814,50.5 L815,48.9 L816,49.1 L817,48.9 L818,50.7 L819,51.0 L820,51.0 L821,50.1 L822,49.6 L823,50.3 L824,50.8 L825,50.4 L826,49.9 L827,49.8 L828,49.6 L829,49.3 L830,49.8 L831,51.0 L832,49.3 L833,50.7 L834,50.0 L835,50.5 L836,49.6 L837,50.9 L838,50.8 L839,50.8 L840,51.0 L841,49.2 L842,49.9 L843,50.6 L844,50.4 L845,48.9 L846,50.1 L847,50.7 L848,49.3 L849,49.6 L850,48.8 L851,51.0 L852,50.0 L853,49.1 L854,49.1 L855,48.9 L856,51.0 L857,50.4 L858,50.8 L859,50.6 L860,48.6 L861,49.5 L862,48.6 L863,50.0 L864,48.8 L865,49.8 L866,50.2 L867,48.9 L868,48.5 L869,50.5 L870,49.3 L871,49.2 L872,50.2 L873,49.8 L874,50.3 L875,50.1 L876,50.0 L877,49.1 L878,48.9 L879,50.1 L880,50.5 L881,49.7 L882,48.8 L883,50.0 L884,49.7 L885,49.9 L886,48.4 L887,49.0 L888,50.2 L889,50.1 L890,49.4 L891,49.0 L892,48.7 L893,50.1 L894,49.9 L895,48.5 L896,49.3 L897,49.6 L898,49.5 L899,47.9 L900,49.5 L901,48.8 L902,49.4 L903,49.2 L904,48.1 L905,47.8 L906,49.3 L907,49.8 L908,48.4 L909,49.8 L910,50.3 L911,48.0 L912,49.2 L913,48.2 L914,49.3 L914,54 Z" fill="#3fc56f"/><path d="M0 22.500H914" stroke="#3db467" stroke-width="1"/></svg><div class="t" style="left:3px;top:-1.600px;font-size:9px;line-height:12px;color:#e8f7ec">12,6 s – 1688</div></div>
<div class="abs" style="left:445px;top:390px;width:2px;height:297px;background:#b2b2b2"></div>
<svg class="abs" style="left:448px;top:446px" width="11" height="17" viewBox="0 0 11 17"><path d="M1 1v12.500l3-2.800 2 4.800 2-.9-2-4.600h4z" fill="#111" stroke="#fff" stroke-width="1"/></svg>
<div class="abs" style="left:364px;top:689.7px;width:733.300px;height:6.600px;background:#838383;border-radius:3.300px"></div>
</div>
</body>
</html>
